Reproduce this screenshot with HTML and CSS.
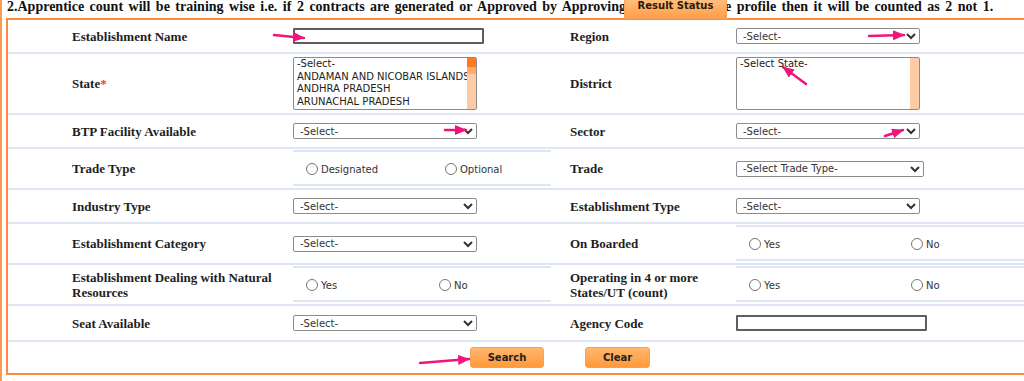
FILE: index.html
```html
<!DOCTYPE html>
<html lang="en">
<head>
    <meta charset="UTF-8">
    <meta name="viewport" content="width=device-width, initial-scale=1.0">
    <title>Establishment Search</title>
    <link rel="stylesheet" href="styles.css">
</head>
<body>
    <div class="page">
        <p class="note">2.Apprentice count will be training wise i.e. if 2 contracts are generated or Approved by Approving Authority in the profile then it will be counted as 2 not 1.</p>

        <div class="panel">
            <div class="row">
                <div class="lbl">Establishment Name</div>
                <div class="ctl"><input type="text" class="txt"></div>
                <div class="lbl lbl2">Region</div>
                <div class="ctl"><select class="sel"><option>-Select-</option></select></div>
            </div>

            <div class="row tall">
                <div class="lbl">State<span class="req">*</span></div>
                <div class="ctl top">
                    <div class="list">
                        <ul>
                            <li>-Select-</li>
                            <li>ANDAMAN AND NICOBAR ISLANDS</li>
                            <li>ANDHRA PRADESH</li>
                            <li>ARUNACHAL PRADESH</li>
                        </ul>
                        <div class="track"><div class="thumb"></div></div>
                    </div>
                </div>
                <div class="lbl lbl2">District</div>
                <div class="ctl top">
                    <div class="list">
                        <ul>
                            <li>-Select State-</li>
                        </ul>
                        <div class="track"></div>
                    </div>
                </div>
            </div>

            <div class="row">
                <div class="lbl">BTP Facility Available</div>
                <div class="ctl"><select class="sel"><option>-Select-</option></select></div>
                <div class="lbl lbl2">Sector</div>
                <div class="ctl"><select class="sel"><option>-Select-</option></select></div>
            </div>

            <div class="row pick">
                <div class="lbl">Trade Type</div>
                <div class="ctl">
                    <div class="opts trade">
                        <label class="opt"><input type="radio" name="tradeType">Designated</label>
                        <label class="opt"><input type="radio" name="tradeType">Optional</label>
                    </div>
                </div>
                <div class="lbl lbl2">Trade</div>
                <div class="ctl"><select class="sel wide"><option>-Select Trade Type-</option></select></div>
            </div>

            <div class="row">
                <div class="lbl">Industry Type</div>
                <div class="ctl"><select class="sel"><option>-Select-</option></select></div>
                <div class="lbl lbl2">Establishment Type</div>
                <div class="ctl"><select class="sel"><option>-Select-</option></select></div>
            </div>

            <div class="row pick">
                <div class="lbl">Establishment Category</div>
                <div class="ctl"><select class="sel"><option>-Select-</option></select></div>
                <div class="lbl lbl2">On Boarded</div>
                <div class="ctl">
                    <div class="opts yn-right">
                        <label class="opt"><input type="radio" name="onBoarded">Yes</label>
                        <label class="opt"><input type="radio" name="onBoarded">No</label>
                    </div>
                </div>
            </div>

            <div class="row pick">
                <div class="lbl">Establishment Dealing with Natural Resources</div>
                <div class="ctl">
                    <div class="opts yn-left">
                        <label class="opt"><input type="radio" name="natural">Yes</label>
                        <label class="opt"><input type="radio" name="natural">No</label>
                    </div>
                </div>
                <div class="lbl lbl2">Operating in 4 or more States/UT (count)</div>
                <div class="ctl">
                    <div class="opts yn-right">
                        <label class="opt"><input type="radio" name="multiState">Yes</label>
                        <label class="opt"><input type="radio" name="multiState">No</label>
                    </div>
                </div>
            </div>

            <div class="row seat">
                <div class="lbl">Seat Available</div>
                <div class="ctl"><select class="sel"><option>-Select-</option></select></div>
                <div class="lbl lbl2">Agency Code</div>
                <div class="ctl"><input type="text" class="txt"></div>
            </div>

            <div class="actions">
                <button type="button" class="btn search">Search</button>
                <button type="button" class="btn clear">Clear</button>
            </div>
        </div>
    </div>

    <div class="tab">Result Status</div>

    <!-- pink pointer marks drawn over the form -->
    <svg class="marks" width="1024" height="381" viewBox="0 0 1024 381">
        <defs>
            <marker id="head" markerUnits="userSpaceOnUse" markerWidth="12" markerHeight="10" refX="11" refY="5" orient="auto">
                <path d="M0 0 L12 5 L0 10 Z" fill="#f0157a"/>
            </marker>
        </defs>
        <g stroke="#f0157a" stroke-width="2.5" stroke-linecap="round" marker-end="url(#head)">
            <line x1="274" y1="35" x2="304" y2="38"/>
            <line x1="869" y1="36" x2="904" y2="35"/>
            <line x1="445" y1="130" x2="466" y2="130"/>
            <line x1="806" y1="84" x2="783" y2="67"/>
            <line x1="885" y1="136" x2="903" y2="130"/>
            <line x1="420" y1="363" x2="469" y2="359"/>
        </g>
    </svg>
</body>
</html>
```

FILE: styles.css
```css
html, body {
    margin: 0;
    overflow: hidden;
    background: #FFFFFF;
}
body {
    position: relative;
    height: 381px;
    font-family: "DejaVu Sans", sans-serif;
}
.page {
    border-left: 2px solid #FF9A4D; /* outer orange rule */
    padding-left: 4px;
    height: 381px;
}
.note {
    margin: 0 0 4px 1px;
    font: bold 14px/14px "Liberation Serif", serif;
    word-spacing: 2px;
    color: #111111;
    white-space: nowrap;
}
.tab {
    position: absolute;
    left: 624px;
    top: -6px;
    width: 101px;
    height: 23px;
    text-align: center;
    font: bold 10px/22px "DejaVu Sans", sans-serif;
    color: #2A1A0A;
    background: linear-gradient(#FFC78F, #FF9D45);
    border: 1px solid #F6A35E;
}
.panel {
    width: 1104px;
    border: 2px solid #FF8A3D;
}
.row {
    display: grid;
    grid-template-columns: 285px 258px 185px 1fr;
    align-items: center;
    height: 32px;
    border-bottom: 2px solid #DEE6F4;
}
.row.tall {
    height: 59px;
}
.row.pick {
    height: 39px;
}
.row.seat {
    height: 34px;
}
.lbl {
    padding-left: 64px;
    font: bold 13px/15px "Liberation Serif", serif;
    color: #1E1E1E;
}
.lbl2 {
    padding-left: 19px;
}
.req {
    color: #EE3A3A;
}
.ctl {
    display: flex;
    align-items: center;
    height: 100%;
}
.ctl.top {
    align-items: flex-start;
}
.txt {
    box-sizing: border-box;
    width: 191px;
    height: 16px;
    padding: 0;
    border: 2px solid #5E5E5E;
    border-radius: 1px;
}
.sel {
    width: 184px;
    height: 16px;
    padding: 0 0 0 2px;
    font: 10px "DejaVu Sans", sans-serif;
    color: #333333;
    background: #FFFFFF;
    border: 1px solid #8C8C8C;
    border-radius: 2px;
}
.sel.wide {
    width: 188px;
}
.list {
    box-sizing: border-box;
    display: flex;
    width: 184px;
    height: 53px;
    margin-top: 3px;
    border: 1px solid #8C8C8C;
    border-radius: 2px;
    overflow: hidden;
}
.list ul {
    flex: 1;
    margin: 0;
    padding: 0 0 0 3px;
    list-style: none;
    font-size: 10px;
    line-height: 12.7px;
    color: #222222;
    white-space: nowrap;
    overflow: hidden;
}
.track {
    width: 9px;
    background: #FFCBA6;
}
.thumb {
    height: 16px;
    background: linear-gradient(#FF7A1C 0 9px, #FFAA6E 9px);
}
.opts {
    box-sizing: border-box;
    align-self: stretch;
    display: flex;
    align-items: center;
    width: 100%;
    margin: 1px 0 2px;
    padding-left: 13px;
    border-top: 2px solid #DEE6F4;
    border-bottom: 2px solid #DEE6F4;
}
.opt {
    display: flex;
    align-items: center;
    padding-top: 2px;
    font-size: 10px;
    color: #333333;
}
.opt input {
    width: 12px;
    height: 12px;
    margin: 0 3px 0 0;
}
.trade .opt:first-child {
    width: 139px;
}
.yn-left .opt:first-child {
    width: 133px;
}
.yn-right .opt:first-child {
    width: 162px;
}
.actions {
    display: flex;
    justify-content: center;
    align-items: flex-start;
    gap: 41px;
    height: 26px;
    padding-top: 5px;
}
.btn {
    height: 21px;
    padding: 0;
    font: bold 10px "DejaVu Sans", sans-serif;
    color: #222222;
    background: linear-gradient(#FFB76F, #FF9A3A);
    border: 1px solid #F4A259;
    border-radius: 3px;
}
.btn.search {
    width: 74px;
}
.btn.clear {
    width: 65px;
}
.marks {
    position: absolute;
    left: 0;
    top: 0;
    pointer-events: none;
}
```
